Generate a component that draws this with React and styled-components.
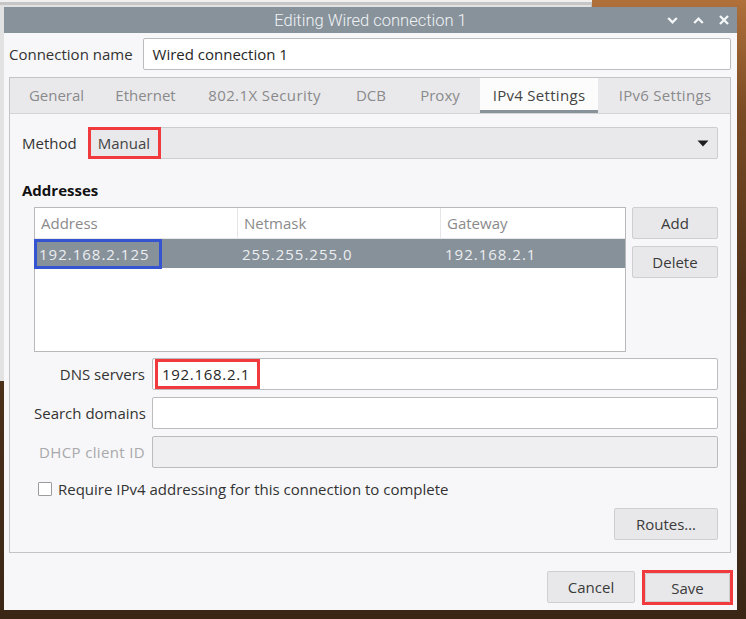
import React from 'react';
import styled, { createGlobalStyle } from 'styled-components';

const Global = createGlobalStyle`
  html, body { margin: 0; padding: 0; }
  body {
    width: 746px; height: 619px; overflow: hidden;
    font-family: "Open Sans", "Noto Sans", sans-serif;
  }
  * { box-sizing: border-box; }
`;

const Desktop = styled.div`
  position: relative;
  width: 746px;
  height: 619px;
  overflow: hidden;
  background: linear-gradient(180deg, #b0703a 0%, #7a4b24 18%, #53341b 45%, #3b2616 100%);
`;

const BehindWindow = styled.div`
  position: absolute;
  left: 0;
  top: 0;
  width: 592px;
  height: 381px;
  background: #e2e2e2;
  border-top: 2px solid #f0f0f0;
  box-shadow: inset 0 3px 0 #c6c6c6, inset -1px 0 0 #bdbdbd;
`;

const Dialog = styled.div`
  position: absolute;
  left: 4px;
  top: 7px;
  width: 733px;
  height: 603px;
  background: #f7f7f9;
  display: flex;
  flex-direction: column;
`;

const TitleBar = styled.div`
  height: 26px;
  flex: none;
  background: #87929b;
  display: grid;
  grid-template-columns: 1fr auto 1fr;
  align-items: center;
`;

const Title = styled.div`
  grid-column: 2;
  font-family: Roboto, "Open Sans", sans-serif;
  font-size: 16.5px;
  font-weight: 300;
  color: #f1f3f5;
`;

const Controls = styled.div`
  grid-column: 3;
  justify-self: end;
  display: flex;
  height: 26px;
`;

const CtlButton = styled.div`
  width: 26px;
  height: 26px;
  display: flex;
  align-items: center;
  justify-content: center;
`;

const Body = styled.div`
  flex: 1;
  display: flex;
  flex-direction: column;
  padding: 5px 6px 7px 5px;
`;

const NameRow = styled.div`
  display: flex;
  align-items: center;
  gap: 10px;
  height: 32px;
`;

const Label = styled.div`
  font-size: 15px;
  color: ${p => (p.$disabled ? '#a9a9ab' : '#333')};
  white-space: nowrap;
  text-align: ${p => (p.$right ? 'right' : 'left')};
  letter-spacing: ${p => (p.$disabled ? '0.35px' : '0')};
`;

const TextInput = styled.div`
  flex: 1;
  height: 32px;
  border: 1px solid #bcbcbe;
  border-radius: 2px;
  background: ${p => (p.$disabled ? '#efeff1' : '#ffffff')};
  display: flex;
  align-items: center;
  padding-left: ${p => p.$pad ?? 9}px;
  font-size: 15px;
  color: #262626;
`;

const Notebook = styled.div`
  margin-top: 7px;
  flex: 1;
  border: 1px solid #c4c4c6;
  display: flex;
  flex-direction: column;
`;

const TabBar = styled.div`
  height: 36px;
  flex: none;
  background: #e9e9eb;
  border-bottom: 1px solid #d4d4d6;
  display: flex;
  gap: 8px;
  padding-left: 7px;
`;

const Tab = styled.div`
  width: ${p => p.$w}px;
  display: flex;
  align-items: center;
  justify-content: center;
  font-size: 15px;
  color: ${p => (p.$active ? '#444' : '#8a8a8c')};
  background: ${p => (p.$active ? '#fcfcfd' : 'transparent')};
  box-shadow: ${p => (p.$active ? 'inset 0 -3px 0 #87929b' : 'none')};
  white-space: nowrap;
  letter-spacing: ${p => p.$ls || 0}px;
  padding-bottom: 1px;
`;

const Page = styled.div`
  flex: 1;
  display: flex;
  flex-direction: column;
  padding: 13px 12px 12px 12px;
`;

const MethodRow = styled.div`
  display: flex;
  align-items: center;
  gap: 11px;
  height: 32px;
`;

const Combo = styled.div`
  flex: 1;
  height: 32px;
  border: 1px solid #cdcdcf;
  border-radius: 2px;
  background: #e9e9eb;
  display: flex;
  align-items: center;
  justify-content: space-between;
  padding-right: 8px;
  font-size: 15px;
  color: #444;
`;

const Mark = styled.span`
  border: 3px solid ${p => p.$color || '#f03a3d'};
  align-self: stretch;
  display: flex;
  align-items: center;
  padding: 0 ${p => p.$padR ?? 8}px 0 ${p => p.$padL ?? 7}px;
  margin: ${p => p.$margin || '0'};
`;

const Ip = styled.span`
  letter-spacing: ${p => p.$ls ?? 1}px;
`;

const SectionTitle = styled.div`
  margin-top: 21px;
  line-height: 20px;
  font-size: 15px;
  font-weight: 700;
  color: #111;
`;

const AddrArea = styled.div`
  margin-top: 7px;
  margin-left: 12px;
  display: flex;
  gap: 6px;
  height: 145px;
`;

const Table = styled.div`
  flex: 1;
  border: 1px solid #b9b9bb;
  background: #fff;
  display: flex;
  flex-direction: column;
`;

const HeadRow = styled.div`
  display: grid;
  grid-template-columns: 202px 203px 1fr;
  height: 31px;
  border-bottom: 1px solid #e6e6e8;
`;

const HeadCell = styled.div`
  display: flex;
  align-items: center;
  padding-left: 6px;
  font-size: 15px;
  color: #8a8a8c;
  border-left: ${p => (p.$first ? 'none' : '1px solid #e6e6e8')};
`;

const DataRow = styled.div`
  display: grid;
  grid-template-columns: 202px 203px 1fr;
  height: 29px;
  background: ${p => (p.$selected ? '#87919a' : 'transparent')};
`;

const DataCell = styled.div`
  display: flex;
  align-items: center;
  padding-left: ${p => p.$pad ?? 5}px;
  font-size: 15px;
  color: #eceef0;
`;

const SideButtons = styled.div`
  width: 86px;
  display: flex;
  flex-direction: column;
  gap: 7px;
`;

const Button = styled.div`
  height: ${p => p.$h || 32}px;
  width: ${p => (p.$w ? `${p.$w}px` : 'auto')};
  border: 1px solid #cfcfd1;
  border-radius: 2px;
  background: #e8e8ea;
  display: flex;
  align-items: center;
  justify-content: center;
  font-size: 15px;
  color: #3a3a3a;
`;

const Fields = styled.div`
  margin-top: 6px;
  margin-left: 12px;
  display: grid;
  grid-template-columns: 111px 1fr;
  grid-auto-rows: 32px;
  column-gap: 7px;
  row-gap: 7px;
  align-items: center;
`;

const CheckRow = styled.div`
  margin-top: 12px;
  margin-left: 16px;
  height: 18px;
  display: flex;
  align-items: center;
  gap: 6px;
  font-size: 15px;
  color: #333;
`;

const Checkbox = styled.span`
  width: 14px;
  height: 14px;
  border: 1px solid #9c9c9e;
  background: #fff;
  border-radius: 1px;
  flex: none;
`;

const RoutesRow = styled.div`
  margin-top: 10px;
  display: flex;
  justify-content: flex-end;
`;

const Footer = styled.div`
  margin-top: 18px;
  display: flex;
  justify-content: flex-end;
  gap: 7px;
  height: 32px;
`;

const SaveFrame = styled.div`
  margin: -1px -2px -2px 0;
  border: 3px solid #f03a3d;
  display: flex;
`;

const Chevron = ({ up }) => (
  <svg width="11" height="7" viewBox="0 0 11 7">
    <path
      d={up ? 'M1.2 6 L5.5 1.7 L9.8 6' : 'M1.2 1 L5.5 5.3 L9.8 1'}
      fill="none"
      stroke="#f4f6f7"
      strokeWidth="2.3"
    />
  </svg>
);

const CloseIcon = () => (
  <svg width="10" height="10" viewBox="0 0 10 10">
    <path d="M1 1 L9 9 M9 1 L1 9" stroke="#f4f6f7" strokeWidth="2.3" fill="none" />
  </svg>
);

const Arrow = () => (
  <svg width="12" height="7" viewBox="0 0 12 7">
    <path d="M0.5 0.5 L11.5 0.5 L6 6.5 Z" fill="#1e1e1e" />
  </svg>
);

const tabs = [
  { name: 'General', w: 79 },
  { name: 'Ethernet', w: 83 },
  { name: '802.1X Security', w: 139, ls: 0.4 },
  { name: 'DCB', w: 58 },
  { name: 'Proxy', w: 64 },
  { name: 'IPv4 Settings', w: 118, ls: 0.3 },
  { name: 'IPv6 Settings', w: 118, ls: 0.3 },
];

export default function App() {
  return (
    <>
      <Global />
      <Desktop>
        <BehindWindow />
        <Dialog>
          <TitleBar>
            <Title>Editing Wired connection 1</Title>
            <Controls>
              <CtlButton><Chevron /></CtlButton>
              <CtlButton><Chevron up /></CtlButton>
              <CtlButton><CloseIcon /></CtlButton>
            </Controls>
          </TitleBar>
          <Body>
            <NameRow>
              <Label>Connection name</Label>
              <TextInput>Wired connection 1</TextInput>
            </NameRow>
            <Notebook>
              <TabBar>
                {tabs.map(t => (
                  <Tab key={t.name} $w={t.w} $ls={t.ls} $active={t.name === 'IPv4 Settings'}>
                    {t.name}
                  </Tab>
                ))}
              </TabBar>
              <Page>
                <MethodRow>
                  <Label>Method</Label>
                  <Combo>
                    <Mark $padL={7} $padR={8} $margin="-1px 0 -1px -1px">Manual</Mark>
                    <Arrow />
                  </Combo>
                </MethodRow>
                <SectionTitle>Addresses</SectionTitle>
                <AddrArea>
                  <Table>
                    <HeadRow>
                      <HeadCell $first>Address</HeadCell>
                      <HeadCell>Netmask</HeadCell>
                      <HeadCell>Gateway</HeadCell>
                    </HeadRow>
                    <DataRow $selected>
                      <DataCell $pad={0}>
                        <Mark $color="#3454d1" $padL={2} $padR={9} $margin="0 0 -1px -1px">
                          <Ip>192.168.2.125</Ip>
                        </Mark>
                      </DataCell>
                      <DataCell><Ip>255.255.255.0</Ip></DataCell>
                      <DataCell><Ip>192.168.2.1</Ip></DataCell>
                    </DataRow>
                  </Table>
                  <SideButtons>
                    <Button>Add</Button>
                    <Button>Delete</Button>
                  </SideButtons>
                </AddrArea>
                <Fields>
                  <Label $right>DNS servers</Label>
                  <TextInput $pad={2}>
                    <Mark $padL={4} $padR={7} $margin="0">
                      <Ip $ls={0.7}>192.168.2.1</Ip>
                    </Mark>
                  </TextInput>
                  <Label $right>Search domains</Label>
                  <TextInput />
                  <Label $right $disabled>DHCP client ID</Label>
                  <TextInput $disabled />
                </Fields>
                <CheckRow>
                  <Checkbox />
                  Require IPv4 addressing for this connection to complete
                </CheckRow>
                <RoutesRow>
                  <Button $w={104}>Routes…</Button>
                </RoutesRow>
              </Page>
            </Notebook>
            <Footer>
              <Button $w={88}>Cancel</Button>
              <SaveFrame>
                <Button $w={85} $h={29}>Save</Button>
              </SaveFrame>
            </Footer>
          </Body>
        </Dialog>
      </Desktop>
    </>
  );
}
